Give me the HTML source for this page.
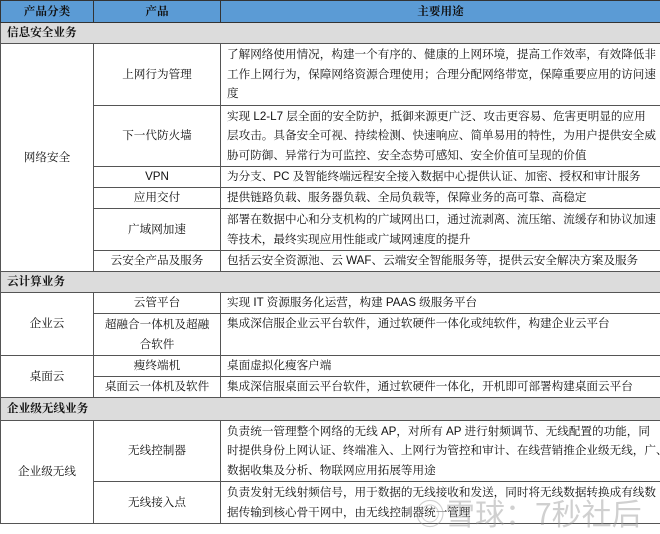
<!DOCTYPE html><html><head><meta charset="utf-8"><style>
body{margin:0;width:660px;height:525px;background:#fff;overflow:hidden;font-family:"Liberation Sans","Noto Serif CJK SC",serif;font-size:11.6px;color:#111}
table{border-collapse:collapse;table-layout:fixed;position:absolute;left:0;top:0;width:660px}
td{border:1px solid #555;padding:0;line-height:19.5px;vertical-align:middle;overflow:hidden}
.h td{background:#5b9bd5;font-weight:bold;text-align:center;border-color:#333}
.s td{background:#dcdcdc;font-weight:bold;padding-left:6px}
.c{text-align:center}
.d{padding-left:6px;white-space:nowrap;letter-spacing:0}
.wm{position:absolute;left:415px;top:490px;font-size:30px;color:rgba(150,150,150,.45);font-family:"Noto Sans CJK SC",sans-serif;white-space:nowrap}
</style></head><body>
<table>
<colgroup><col style="width:93px"><col style="width:127px"><col style="width:440px"></colgroup>
<tr class="h" style="height:22px"><td>产品分类</td><td>产品</td><td>主要用途</td></tr>
<tr class="s" style="height:21px"><td colspan="3">信息安全业务</td></tr>
<tr style="height:62px"><td class="c" rowspan="6">网络安全</td><td class="c">上网行为管理</td><td class="d">了解网络使用情况，构建一个有序的、健康的上网环境，提高工作效率，有效降低非<br>工作上网行为，保障网络资源合理使用；合理分配网络带宽，保障重要应用的访问速<br>度</td></tr>
<tr style="height:61px"><td class="c">下一代防火墙</td><td class="d">实现 L2-L7 层全面的安全防护，抵御来源更广泛、攻击更容易、危害更明显的应用<br>层攻击。具备安全可视、持续检测、快速响应、简单易用的特性，为用户提供安全威<br>胁可防御、异常行为可监控、安全态势可感知、安全价值可呈现的价值</td></tr>
<tr style="height:21px"><td class="c">VPN</td><td class="d">为分支、PC 及智能终端远程安全接入数据中心提供认证、加密、授权和审计服务</td></tr>
<tr style="height:21px"><td class="c">应用交付</td><td class="d">提供链路负载、服务器负载、全局负载等，保障业务的高可靠、高稳定</td></tr>
<tr style="height:42px"><td class="c">广域网加速</td><td class="d">部署在数据中心和分支机构的广域网出口，通过流剥离、流压缩、流缓存和协议加速<br>等技术，最终实现应用性能或广域网速度的提升</td></tr>
<tr style="height:21px"><td class="c">云安全产品及服务</td><td class="d">包括云安全资源池、云 WAF、云端安全智能服务等，提供云安全解决方案及服务</td></tr>
<tr class="s" style="height:21px"><td colspan="3">云计算业务</td></tr>
<tr style="height:21px"><td class="c" rowspan="2">企业云</td><td class="c">云管平台</td><td class="d">实现 IT 资源服务化运营，构建 PAAS 级服务平台</td></tr>
<tr style="height:42px"><td class="c">超融合一体机及超融<br>合软件</td><td class="d" style="vertical-align:top">集成深信服企业云平台软件，通过软硬件一体化或纯软件，构建企业云平台</td></tr>
<tr style="height:21px"><td class="c" rowspan="2">桌面云</td><td class="c">瘦终端机</td><td class="d">桌面虚拟化瘦客户端</td></tr>
<tr style="height:21px"><td class="c">桌面云一体机及软件</td><td class="d">集成深信服桌面云平台软件，通过软硬件一体化，开机即可部署构建桌面云平台</td></tr>
<tr class="s" style="height:23px"><td colspan="3">企业级无线业务</td></tr>
<tr style="height:61px"><td class="c" rowspan="2">企业级无线</td><td class="c">无线控制器</td><td class="d">负责统一管理整个网络的无线 AP，对所有 AP 进行射频调节、无线配置的功能，同<br>时提供身份上网认证、终端准入、上网行为管控和审计、在线营销推企业级无线，广、<br>数据收集及分析、物联网应用拓展等用途</td></tr>
<tr style="height:42px"><td class="c">无线接入点</td><td class="d">负责发射无线射频信号，用于数据的无线接收和发送，同时将无线数据转换成有线数<br>据传输到核心骨干网中，由无线控制器统一管理</td></tr>
</table>
<div class="wm">◎雪球：7秒社后</div>
</body></html>
